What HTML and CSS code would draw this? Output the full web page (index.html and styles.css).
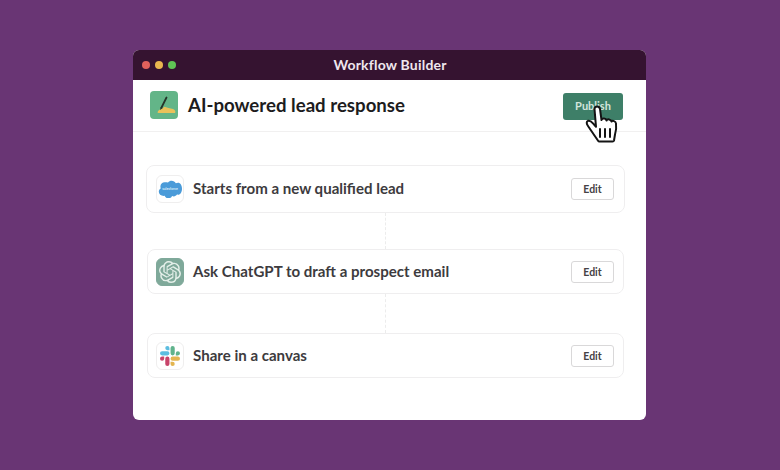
FILE: index.html
```html
<!DOCTYPE html>
<html lang="en">
<head>
<meta charset="utf-8">
<title>Workflow Builder</title>
<link rel="stylesheet" href="styles.css">
</head>
<body>
<main class="window">
  <header class="titlebar">
    <div class="lights"><span class="light red"></span><span class="light yellow"></span><span class="light green"></span></div>
    <div class="title">Workflow Builder</div>
  </header>
  <section class="head">
    <div class="emoji">
      <svg viewBox="0 0 28 28" width="28" height="28"><path d="M7.500 21.800c0-2 2-3.700 4-3.900l3-2.200 4 1.200 4.500 1c2 .5 3 2.800 2 4.100H8.500c-.6 0-1-.2-1-.2z" fill="#e9c25a"/><path d="M16.500 6.500 11.500 16.500" stroke="#26352a" stroke-width="1.800" stroke-linecap="round"/><path d="M10 19l.6-3 2 1z" fill="#26352a"/></svg>
    </div>
    <h1 class="head-title">AI-powered lead response</h1>
    <button class="publish">Publish</button>
    <svg class="cursor" viewBox="0 0 36 40" width="36" height="40">
      <path d="M10.500 5c0-3.500 5-3.500 5.500 0l1.500 11c.5-2 4.500-2 5 .5.800-1.800 4.500-1.500 5 1 1-1.200 4.200-.6 4.500 2 .5 4 0 8-1 11l-1 6c-.2.800-.8 1-1.500 1h-13c-.8 0-1.200-.3-1.600-1L4 22c-1.800-2.500-1.600-4.500 0-5.200 1.600-.6 3.500.8 5 2.500l3 3.500z" fill="#fff" stroke="#141414" stroke-width="2" stroke-linejoin="round"/>
      <path d="M16 25v8M21 25v8M26 25v8" stroke="#141414" stroke-width="2" stroke-linecap="round"/>
    </svg>
  </section>
  <section class="steps">
    <article class="step step-first">
      <div class="icon">
        <svg viewBox="0 0 24 18" width="24" height="18"><path d="M10 2.500C10.900 1.400 12.200.8 13.600.8c1.800 0 3.400 1 4.200 2.400.7-.3 1.500-.5 2.300-.5 2.300 0 3.900 2.700 3.900 6s-1.600 6-3.900 6c-.4 0-.8 0-1.100-.1-.7 1.100-1.900 1.800-3.300 1.800-.6 0-1.100-.1-1.600-.4-.6 1.400-2.100 2.400-3.700 2.400-1.700 0-3.200-1-3.800-2.600-.3.100-.6.100-.8.100C2.700 15.900.8 14.100.8 11.800c0-1.500.8-2.900 2-3.600-.3-.6-.4-1.200-.4-1.800C2.400 4 4.300 2.200 6.700 2.200c1.300 0 2.500.2 3.300.3z" fill="#4a9bd9"/><text class="sf-text" x="12" y="10.300" text-anchor="middle">salesforce</text></svg>
      </div>
      <div class="label">Starts from a new qualified lead</div>
      <button class="edit">Edit</button>
    </article>
    <div class="connector connector-short"></div>
    <article class="step">
      <div class="icon icon-gpt">
        <svg viewBox="0 0 24 24" width="22" height="22"><path fill="#e4efe9" d="M22.2819 9.8211a5.9847 5.9847 0 0 0-.5157-4.9108 6.0462 6.0462 0 0 0-6.5098-2.9A6.0651 6.0651 0 0 0 4.9807 4.1818a5.9847 5.9847 0 0 0-3.9977 2.9 6.0462 6.0462 0 0 0 .7427 7.0966 5.98 5.98 0 0 0 .511 4.9107 6.051 6.051 0 0 0 6.5146 2.9001A5.9847 5.9847 0 0 0 13.2599 24a6.0557 6.0557 0 0 0 5.7718-4.2058 5.9894 5.9894 0 0 0 3.9977-2.9001 6.0557 6.0557 0 0 0-.7475-7.0729zm-9.022 12.6081a4.4755 4.4755 0 0 1-2.8764-1.0408l.1419-.0804 4.7783-2.7582a.7948.7948 0 0 0 .3927-.6813v-6.7369l2.02 1.1686a.071.071 0 0 1 .038.052v5.5826a4.504 4.504 0 0 1-4.4945 4.4944zm-9.6607-4.1254a4.4708 4.4708 0 0 1-.5346-3.0137l.142.0852 4.783 2.7582a.7712.7712 0 0 0 .7806 0l5.8428-3.3685v2.3324a.0804.0804 0 0 1-.0332.0615L9.74 19.9502a4.4992 4.4992 0 0 1-6.1408-1.6464zM2.3408 7.8956a4.485 4.485 0 0 1 2.3655-1.9728V11.6a.7664.7664 0 0 0 .3879.6765l5.8144 3.3543-2.0201 1.1685a.0757.0757 0 0 1-.071 0l-4.8303-2.7865A4.504 4.504 0 0 1 2.3408 7.872zm16.5963 3.8558L13.1038 8.364 15.1192 7.2a.0757.0757 0 0 1 .071 0l4.8303 2.7913a4.4944 4.4944 0 0 1-.6765 8.1042v-5.6772a.79.79 0 0 0-.407-.667zm2.0107-3.0231l-.142-.0852-4.7735-2.7818a.7759.7759 0 0 0-.7854 0L9.409 9.2297V6.8974a.0662.0662 0 0 1 .0284-.0615l4.8303-2.7866a4.4992 4.4992 0 0 1 6.6802 4.66zM8.3065 12.863l-2.02-1.1638a.0804.0804 0 0 1-.038-.0567V6.0742a4.4992 4.4992 0 0 1 7.3757-3.4537l-.142.0805L8.704 5.459a.7948.7948 0 0 0-.3927.6813zm1.0976-2.3654l2.602-1.4998 2.6069 1.4998v2.9994l-2.5974 1.4997-2.6067-1.4997Z"/></svg>
      </div>
      <div class="label">Ask ChatGPT to draft a prospect email</div>
      <button class="edit">Edit</button>
    </article>
    <div class="connector"></div>
    <article class="step">
      <div class="icon">
        <svg viewBox="0 0 24 24" width="20" height="20">
          <path fill="#c8446a" d="M5.042 15.165a2.528 2.528 0 0 1-2.52 2.523A2.528 2.528 0 0 1 0 15.165a2.527 2.527 0 0 1 2.522-2.52h2.52v2.52zM6.313 15.165a2.527 2.527 0 0 1 2.521-2.52 2.527 2.527 0 0 1 2.521 2.52v6.313A2.528 2.528 0 0 1 8.834 24a2.528 2.528 0 0 1-2.521-2.522v-6.313z"/>
          <path fill="#5cbde0" d="M8.834 5.042a2.528 2.528 0 0 1-2.521-2.52A2.528 2.528 0 0 1 8.834 0a2.528 2.528 0 0 1 2.521 2.522v2.52H8.834zM8.834 6.313a2.528 2.528 0 0 1 2.521 2.521 2.528 2.528 0 0 1-2.521 2.521H2.522A2.528 2.528 0 0 1 0 8.834a2.528 2.528 0 0 1 2.522-2.521h6.312z"/>
          <path fill="#60b38c" d="M18.956 8.834a2.528 2.528 0 0 1 2.522-2.521A2.528 2.528 0 0 1 24 8.834a2.528 2.528 0 0 1-2.522 2.521h-2.522V8.834zM17.688 8.834a2.528 2.528 0 0 1-2.523 2.521 2.527 2.527 0 0 1-2.52-2.521V2.522A2.527 2.527 0 0 1 15.165 0a2.528 2.528 0 0 1 2.523 2.522v6.312z"/>
          <path fill="#e3b550" d="M15.165 18.956a2.528 2.528 0 0 1 2.523 2.522A2.528 2.528 0 0 1 15.165 24a2.527 2.527 0 0 1-2.52-2.522v-2.522h2.52zM15.165 17.688a2.527 2.527 0 0 1-2.52-2.523 2.526 2.526 0 0 1 2.52-2.52h6.313A2.527 2.527 0 0 1 24 15.165a2.528 2.528 0 0 1-2.522 2.523h-6.313z"/>
        </svg>
      </div>
      <div class="label">Share in a canvas</div>
      <button class="edit">Edit</button>
    </article>
  </section>
</main>
</body>
</html>
```
FILE: styles.css
```css
* { box-sizing: border-box; }
html, body { margin: 0; height: 100%; }
body {
  background: #693574;
  font-family: Lato, "Liberation Sans", sans-serif;
  padding: 50px 134px 50px 133px;
  overflow: hidden;
}
.window {
  width: 513px;
  height: 370px;
  background: #fff;
  border-radius: 6px;
  overflow: hidden;
  display: flex;
  flex-direction: column;
}
.titlebar {
  height: 30px;
  flex: none;
  background: #351330;
  display: flex;
  align-items: center;
  padding-left: 9px;
}
.lights { display: flex; gap: 5px; }
.light { width: 8px; height: 8px; border-radius: 50%; }
.red { background: #e0605c; }
.yellow { background: #e8b64f; }
.green { background: #5fc454; }
.title {
  flex: 1;
  text-align: center;
  color: #efe7ee;
  font-size: 14px;
  font-weight: 700;
  padding-right: 42px;
  padding-bottom: 2px;
  letter-spacing: .2px;
}
.head {
  height: 52px;
  flex: none;
  display: flex;
  align-items: center;
  padding: 0 23px 0 17px;
  border-bottom: 1px solid #f1f0f0;
  position: relative;
}
.emoji {
  width: 28px;
  height: 28px;
  border-radius: 4px;
  background: #63b588;
  flex: none;
  margin-bottom: 1px;
}
.emoji svg { display: block; }
.head-title {
  margin: 0 0 1px 10px;
  flex: 1;
  font-size: 18.650px;
  font-weight: 700;
  color: #1d1c1d;
}
.publish {
  width: 60px;
  height: 27px;
  margin-top: 2px;
  background: #3e7f68;
  color: #d3e5dc;
  border: 0;
  border-radius: 3px;
  font: 700 11px Lato, "Liberation Sans", sans-serif;
  padding: 0 0 2px;
}
.cursor {
  position: absolute;
  left: 451px;
  top: 24px;
}
.steps {
  display: flex;
  flex-direction: column;
  padding: 33px 22px 0 14px;
}
.step {
  height: 45px;
  border: 1px solid #efeeef;
  border-radius: 8px;
  display: flex;
  align-items: center;
  padding: 0 9px 0 8px;
  background: #fff;
}
.step-first {
  height: 48px;
  margin: 0 -1px;
  padding: 0 10px 0 9px;
}
.icon {
  width: 28px;
  height: 28px;
  flex: none;
  border-radius: 6px;
  border: 1px solid #efeeee;
  background: #fff;
  display: flex;
  align-items: center;
  justify-content: center;
}
.icon-gpt { background: #7fa99a; border-color: #7fa99a; }
.sf-text { font: 700 3.500px Lato, sans-serif; fill: #dcecf8; }
.label {
  flex: 1;
  margin-left: 9px;
  padding-bottom: 2px;
  font-size: 15.070px;
  font-weight: 700;
  color: #3d3b3e;
}
.edit {
  width: 43px;
  height: 22px;
  background: #fff;
  border: 1px solid #d9d8d9;
  border-radius: 3px;
  color: #454245;
  font: 700 10.500px Lato, "Liberation Sans", sans-serif;
  padding: 0;
}
.connector {
  width: 0;
  height: 39px;
  margin-left: 238px;
  border-left: 1px dashed #ececec;
}
.connector-short { height: 36px; }
```
